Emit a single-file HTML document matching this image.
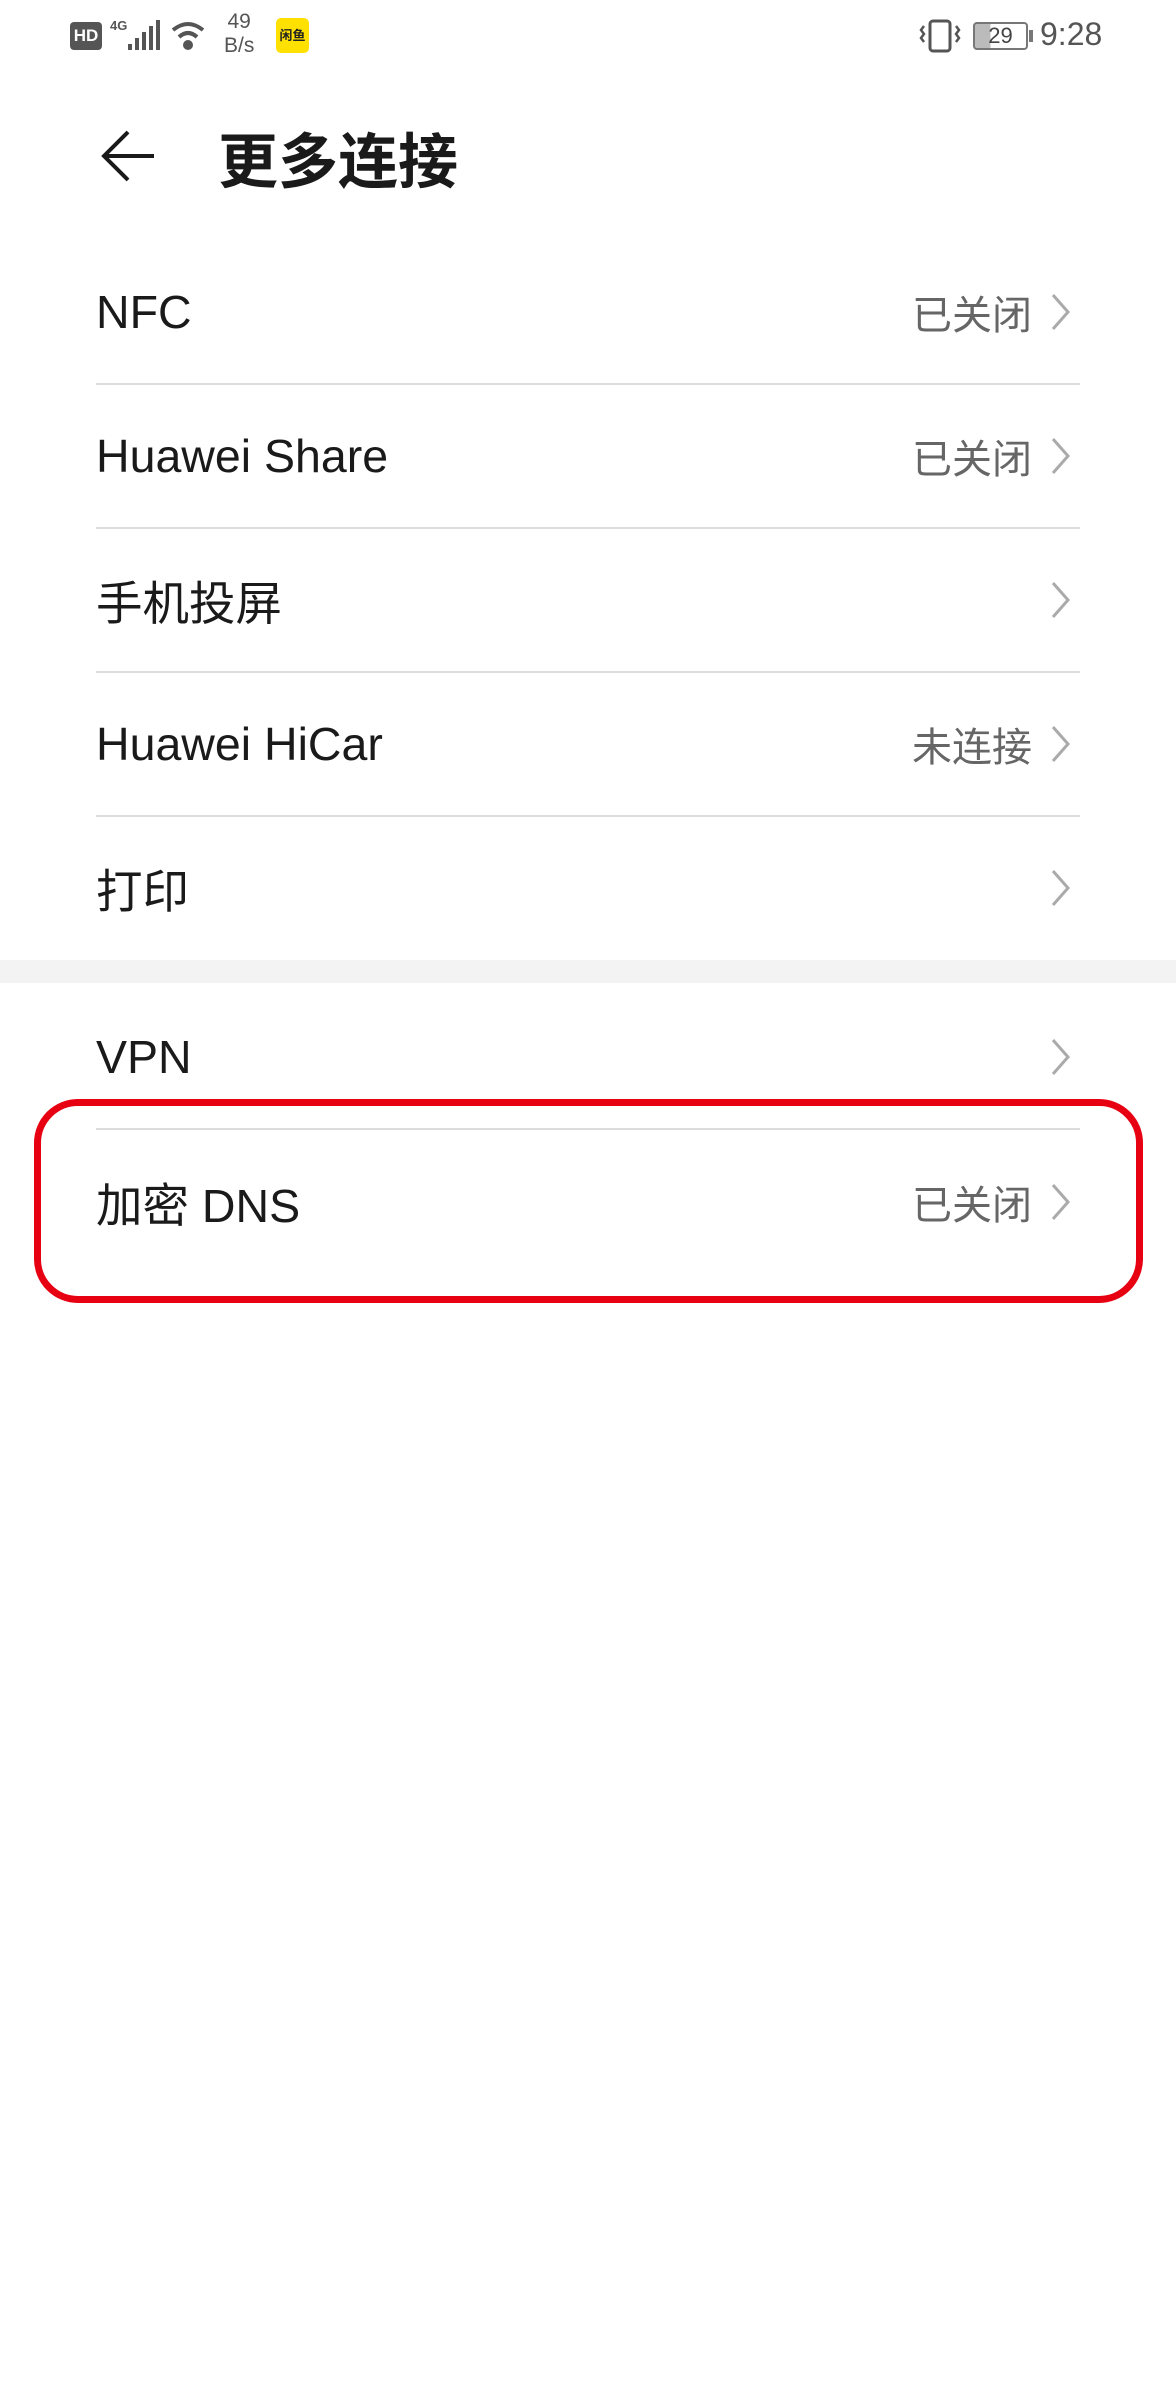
<!DOCTYPE html>
<html><head><meta charset="utf-8"><style>
*{margin:0;padding:0;box-sizing:border-box}
body{width:1176px;height:2400px;background:#fff;position:relative;overflow:hidden;font-family:"Liberation Sans","Noto Sans CJK SC",sans-serif;color:#1a1a1a}
.abs{position:absolute}
.row{position:absolute;left:96px;width:984px;height:144px;display:flex;align-items:center;justify-content:space-between}
.row .t{font-size:46.5px;color:#1a1a1a}
.row .r{display:flex;align-items:center;font-size:40px;color:#666}
.row svg{margin-left:18px;margin-right:8px}
.div{position:absolute;left:96px;width:984px;height:2px;background:#dcdcdc}
</style></head><body>
<div class="abs" style="left:70px;top:22px;width:32px;height:28px;background:#555;border-radius:4px;color:#fff;font-size:17px;font-weight:bold;text-align:center;line-height:28px">HD</div>
<div class="abs" style="left:110px;top:18px;font-size:13px;font-weight:bold;color:#555">4G</div>
<svg class="abs" style="left:128px;top:20px" width="34" height="32"><g fill="#555"><rect x="0" y="24" width="4" height="6"/><rect x="7" y="18" width="4" height="12"/><rect x="14" y="12" width="4" height="18"/><rect x="21" y="6" width="4" height="24"/><rect x="28" y="0" width="4" height="30"/></g></svg>
<svg class="abs" style="left:170px;top:20px" width="40" height="32"><g fill="none" stroke="#555" stroke-width="4"><path d="M3 10 Q18 -2 33 10"/><path d="M9 17 Q18 9 27 17"/></g><circle cx="18" cy="25" r="5" fill="#555"/></svg>
<div class="abs" style="left:224px;top:10px;font-size:21px;color:#555;line-height:24px;text-align:center">49<br>B/s</div>
<div class="abs" style="left:276px;top:18px;width:33px;height:35px;background:#ffe100;border-radius:5px;font-size:13px;font-weight:bold;text-align:center;line-height:35px;color:#222">闲鱼</div>
<svg class="abs" style="left:918px;top:18px" width="44" height="36"><rect x="12" y="3" width="20" height="30" rx="3" fill="none" stroke="#555" stroke-width="3"/><path d="M6 8 l-3 4 l3 4 l-3 4 l3 4 M38 8 l3 4 l-3 4 l3 4 l-3 4" fill="none" stroke="#555" stroke-width="2.5"/></svg>
<div class="abs" style="left:973px;top:22px;width:55px;height:28px;border:2px solid #777;border-radius:4px;background:linear-gradient(90deg,#bbb 30%,#fff 30%);font-size:22px;color:#444;text-align:center;line-height:24px">29</div>
<div class="abs" style="left:1029px;top:30px;width:4px;height:12px;background:#777"></div>
<div class="abs" style="left:1040px;top:16px;font-size:32px;color:#555">9:28</div>
<svg class="abs" style="left:100px;top:128px" width="60" height="56"><path d="M54 28 H6 M28 4 L4 28 L28 52" fill="none" stroke="#1a1a1a" stroke-width="4"/></svg>
<div class="abs" style="left:218px;top:114px;font-size:60px;font-weight:bold;color:#1a1a1a">更多连接</div>
<div class="row" style="top:240px"><span class="t">NFC</span><span class="r">已关闭<svg width="22" height="38"><path d="M3 2 L18 19 L3 36" fill="none" stroke="#aaa" stroke-width="3"/></svg></span></div>
<div class="div" style="top:383px"></div>
<div class="row" style="top:384px"><span class="t">Huawei Share</span><span class="r">已关闭<svg width="22" height="38"><path d="M3 2 L18 19 L3 36" fill="none" stroke="#aaa" stroke-width="3"/></svg></span></div>
<div class="div" style="top:527px"></div>
<div class="row" style="top:528px"><span class="t">手机投屏</span><span class="r"><svg width="22" height="38"><path d="M3 2 L18 19 L3 36" fill="none" stroke="#aaa" stroke-width="3"/></svg></span></div>
<div class="div" style="top:671px"></div>
<div class="row" style="top:672px"><span class="t">Huawei HiCar</span><span class="r">未连接<svg width="22" height="38"><path d="M3 2 L18 19 L3 36" fill="none" stroke="#aaa" stroke-width="3"/></svg></span></div>
<div class="div" style="top:815px"></div>
<div class="row" style="top:816px"><span class="t">打印</span><span class="r"><svg width="22" height="38"><path d="M3 2 L18 19 L3 36" fill="none" stroke="#aaa" stroke-width="3"/></svg></span></div>
<div class="abs" style="left:0;top:960px;width:1176px;height:23px;background:#f3f3f3"></div>
<div class="row" style="top:985px"><span class="t">VPN</span><span class="r"><svg width="22" height="38"><path d="M3 2 L18 19 L3 36" fill="none" stroke="#aaa" stroke-width="3"/></svg></span></div>
<div class="div" style="top:1128px"></div>
<div class="row" style="top:1130px"><span class="t">加密 DNS</span><span class="r">已关闭<svg width="22" height="38"><path d="M3 2 L18 19 L3 36" fill="none" stroke="#aaa" stroke-width="3"/></svg></span></div>
<div class="abs" style="left:34px;top:1099px;width:1109px;height:204px;border:7px solid #e60012;border-radius:44px"></div>
</body></html>
